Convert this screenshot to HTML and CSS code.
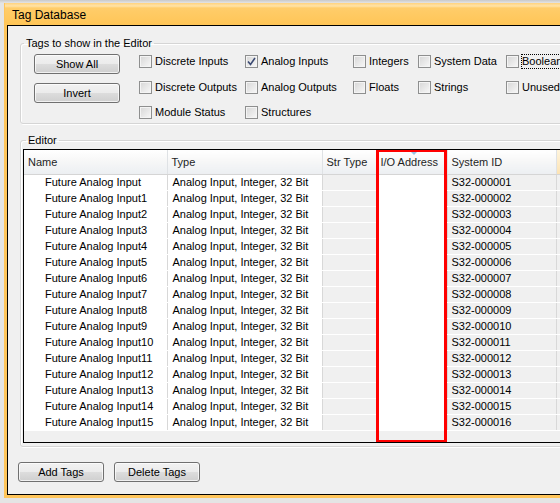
FILE: index.html
```html
<!DOCTYPE html>
<html>
<head>
<meta charset="utf-8">
<link rel="stylesheet" href="styles.css">
</head>
<body>
<div class="window">
  <div class="titlebar">Tag Database</div>
  <div class="client">
    <fieldset class="group tags">
      <legend>Tags to show in the Editor</legend>
      <div class="tags-body">
        <div class="btn-col">
          <button class="btn">Show All</button>
          <button class="btn">Invert</button>
        </div>
        <div class="checks">
          <label class="chk"><span class="box"></span>Discrete Inputs</label>
          <label class="chk"><span class="box checked"><svg viewBox="0 0 9 9" width="9" height="9"><path d="M1 4.5 L3.5 7.5 L8 1" fill="none" stroke="#3b4a73" stroke-width="1.6"/></svg></span>Analog Inputs</label>
          <label class="chk"><span class="box"></span>Integers</label>
          <label class="chk"><span class="box"></span>System Data</label>
          <label class="chk"><span class="box"></span><span class="focus">Boolean</span></label>
          <label class="chk"><span class="box"></span>Discrete Outputs</label>
          <label class="chk"><span class="box"></span>Analog Outputs</label>
          <label class="chk"><span class="box"></span>Floats</label>
          <label class="chk"><span class="box"></span>Strings</label>
          <label class="chk"><span class="box"></span>Unused</label>
          <label class="chk"><span class="box"></span>Module Status</label>
          <label class="chk"><span class="box"></span>Structures</label>
        </div>
      </div>
    </fieldset>
    <fieldset class="group editor">
      <legend>Editor</legend>
      <div class="grid-frame">
        <table class="grid">
          <colgroup>
            <col class="c-name"><col class="c-type"><col class="c-str"><col class="c-io"><col class="c-sys"><col class="c-more">
          </colgroup>
          <thead>
            <tr>
              <th>Name</th><th>Type</th><th>Str Type</th><th class="sorted">I/O Address</th><th>System ID</th><th class="hot"></th>
            </tr>
          </thead>
          <tbody id="rows"></tbody>
        </table>
        <div class="highlight"></div>
      </div>
    </fieldset>
    <div class="actions">
      <button class="btn">Add Tags</button>
      <button class="btn">Delete Tags</button>
    </div>
  </div>
</div>
<script src="app.js"></script>
</body>
</html>
```
FILE: app.js
```js
var tb = document.getElementById('rows');
var html = '';
for (var i = 0; i < 16; i++) {
  var name = 'Future Analog Input' + (i === 0 ? '' : i);
  var id = 'S32-' + String(i + 1).padStart(6, '0');
  html += '<tr><td class="name">' + name + '</td><td>Analog Input, Integer, 32 Bit</td><td class="ro"></td><td class="io"></td><td class="ro">' + id + '</td><td class="ro"></td></tr>';
}
tb.innerHTML = html;
```
FILE: styles.css
```css
html, body {
  margin: 0;
  padding: 0;
  width: 560px;
  height: 503px;
  overflow: hidden;
  background: #d9d9d9;
  font-family: "Liberation Sans", Arial, sans-serif;
  font-size: 11px;
  color: #000;
}
body {
  padding-top: 3px;
  padding-left: 4px;
  box-sizing: border-box;
  background: linear-gradient(#c9c9c9, #e4e4e4 3px);
}
.window {
  width: 620px;
  background: #ffc55a;
  padding-left: 3px;
  padding-bottom: 3px;
}
.titlebar {
  height: 22px;
  box-sizing: border-box;
  padding: 5px 0 0 7px;
  line-height: 14px;
  font-size: 12px;
  background: linear-gradient(#ffd27d 0, #ffe3a8 3px, #ffcd6a 5px, #ffc557 22px);
  margin-left: -2px;
}
.client {
  background: #f0f0f0;
  border-top: 1px solid #000;
  border-left: 1px solid #000;
  border-bottom: 1px solid #000;
  height: 470px;
  box-sizing: border-box;
  padding-top: 11px;
}
.group {
  margin: 0 0 0 12px;
  padding: 0;
  border: 1px solid #d5d5d5;
  border-radius: 3px;
  box-shadow: inset 1px 1px 0 #fff, 1px 1px 0 #fff;
  min-width: 0;
}
.group legend {
  padding: 0 2px;
  margin-left: 3px;
  line-height: 13px;
}
.tags {
  height: 87px;
  box-sizing: border-box;
}
.tags-body {
  display: flex;
  padding: 4px 0 0 13px;
}
.btn-col {
  display: flex;
  flex-direction: column;
  gap: 9px;
  width: 86px;
  margin-right: 19px;
}
.btn {
  width: 86px;
  height: 20px;
  padding: 0;
  font: inherit;
  color: #000;
  border: 1px solid #707070;
  border-radius: 3px;
  background: linear-gradient(#f2f2f2 0, #ebebeb 50%, #dddddd 50%, #cfcfcf 100%);
  box-shadow: inset 0 0 0 1px rgba(255,255,255,0.7);
}
.checks {
  display: grid;
  grid-template-columns: 106px 108px 65px 88px 80px;
  grid-auto-rows: 13px;
  row-gap: 12.5px;
  padding-top: 1px;
}
.chk {
  display: flex;
  align-items: center;
  white-space: nowrap;
  line-height: 13px;
}
.box {
  width: 11px;
  height: 11px;
  border: 1px solid #8e8f8f;
  background: linear-gradient(135deg, #d6d6d6, #f8f8f8);
  box-shadow: inset 0 0 0 1px #f4f4f4;
  margin-right: 3px;
  flex: none;
  display: flex;
  align-items: center;
  justify-content: center;
}
.box svg { display: block; }
.focus {
  outline: 1px dotted #000;
  outline-offset: 0;
}
.editor {
  margin-top: 10px;
  padding: 0 0 3px 2px;
}
.grid-frame {
  position: relative;
  margin-top: 2px;
  height: 294px;
  box-sizing: border-box;
  border-top: 1px solid #000;
  border-left: 1px solid #000;
  border-bottom: 1px solid #000;
  background: #f0f0f0;
  overflow: hidden;
}
.grid {
  border-collapse: collapse;
  table-layout: fixed;
  width: 620px;
}
.c-name { width: 143px; }
.c-type { width: 155px; }
.c-str { width: 54px; }
.c-io { width: 71px; }
.c-sys { width: 109px; }
.c-more { width: 88px; }
.grid th {
  height: 24px;
  padding: 0 0 0 4px;
  text-align: left;
  font-weight: normal;
  color: #1e1e1e;
  background: linear-gradient(#ffffff 0, #f8f8f8 40%, #eceff2 100%);
  border-right: 1px solid #dfe2e5;
  border-bottom: 1px solid #d5d5d5;
  white-space: nowrap;
  position: relative;
}
.grid th.sorted::before {
  content: "";
  position: absolute;
  left: 33px;
  top: 1px;
  border-left: 4px solid transparent;
  border-right: 4px solid transparent;
  border-top: 4px solid #97c3e3;
}
.grid th.hot {
  background: linear-gradient(#fff4dd, #fce3b4);
  border-left: 1px solid #f0c070;
}
.grid td {
  height: 15px;
  padding: 0 0 0 5px;
  line-height: 15px;
  white-space: nowrap;
  overflow: hidden;
  background: #fff;
  border-right: 1px solid #d8d8d8;
  border-bottom: 1px solid #fff;
}
.grid td.name { padding-left: 21px; }
.grid td.ro {
  background: #f0f0f0;
  padding-left: 4px;
}
.highlight {
  position: absolute;
  left: 352px;
  top: -1px;
  width: 71px;
  height: 294px;
  box-sizing: border-box;
  border: 3px solid #ff0000;
}
.actions {
  display: flex;
  gap: 10px;
  padding: 15px 0 0 10px;
}
```
